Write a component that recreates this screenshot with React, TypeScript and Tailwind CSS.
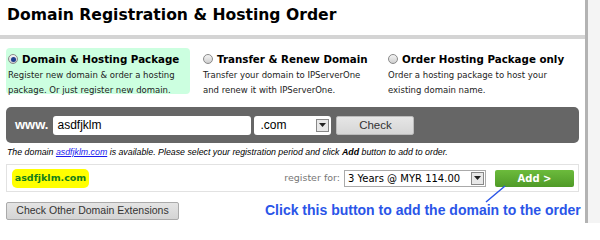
import React from 'react';

const verdana = { fontFamily: '"DejaVu Sans", Verdana, sans-serif' };
const arial = { fontFamily: '"Liberation Sans", Arial, sans-serif' };

function Radio({ checked }: { checked?: boolean }) {
  return (
    <span className="inline-flex h-[10px] w-[10px] shrink-0 items-center justify-center rounded-full border border-[#8a8a8a] bg-gradient-to-b from-[#f4f4f4] to-[#cfcfcf]">
      {checked && <span className="h-[5px] w-[5px] rounded-full bg-[#1f3f8f]" />}
    </span>
  );
}

function Package({ title, lines, active }: { title: string; lines: string[]; active?: boolean }) {
  return (
    <div className={`flex flex-col px-[2px] pt-[4px] rounded-[4px] h-[46px] ${active ? 'bg-[#ccffe0]' : ''}`}>
      <div className="flex items-center gap-[4px] whitespace-nowrap text-[10.3px] font-bold text-black leading-[14px]" style={verdana}>
        <Radio checked={active} />
        <span>{title}</span>
      </div>
      <div className="mt-[2px] whitespace-nowrap text-[8.5px] leading-[14.5px] text-[#222]" style={verdana}>
        {lines.map((l) => (
          <div key={l}>{l}</div>
        ))}
      </div>
    </div>
  );
}

function SelectArrow() {
  return (
    <span className="flex h-[13px] w-[13px] items-center justify-center border border-[#888] bg-[#e8e8e8]">
      <svg width="7" height="4" viewBox="0 0 7 4">
        <path d="M0 0h7L3.5 4z" fill="#222" />
      </svg>
    </span>
  );
}

export default function App() {
  return (
    <div className="relative flex h-[223px] w-[600px] overflow-hidden bg-white">
      <div className="flex w-[585px] flex-col">
        <h1 className="flex h-[35px] items-center whitespace-nowrap pb-[4px] pl-[7px] text-[15.6px] font-bold text-black" style={verdana}>
          Domain Registration &amp; Hosting Order
        </h1>
        <div className="h-[4px] bg-[#d4d4d4]" />

        <div className="mx-[6px] mt-[9px] grid grid-cols-[184px_174px_1fr] gap-[11px]">
          <Package
            active
            title="Domain & Hosting Package"
            lines={['Register new domain & order a hosting', 'package. Or just register new domain.']}
          />
          <Package
            title="Transfer & Renew Domain"
            lines={['Transfer your domain to IPServerOne', 'and renew it with IPServerOne.']}
          />
          <Package
            title="Order Hosting Package only"
            lines={['Order a hosting package to host your', 'existing domain name.']}
          />
        </div>

        <div className="mx-[6px] mt-[13px] flex h-[36px] shrink-0 items-center rounded-[5px] bg-[#666666] pl-[9px]">
          <span className="mr-[5px] text-[13px] font-bold text-white" style={arial}>www.</span>
          <div className="flex h-[19px] w-[198px] items-center rounded-[3px] bg-white pl-[4px] text-[12px] text-black" style={arial}>
            asdfjklm
          </div>
          <div className="ml-[3px] flex h-[19px] w-[77px] items-center justify-between rounded-[3px] bg-white pl-[6px] pr-[2px] text-[12px] text-black" style={arial}>
            .com
            <SelectArrow />
          </div>
          <button className="ml-[5px] h-[19px] w-[78px] rounded-[2px] border border-[#bbb] bg-gradient-to-b from-[#e6e6e6] to-[#d6d6d6] text-[11.5px] text-[#333]" style={arial}>
            Check
          </button>
        </div>

        <p className="mx-[7px] mt-[2px] whitespace-nowrap text-[8.8px] italic leading-[14px] text-black" style={arial}>
          The domain <span className="text-[#1a1aee] underline">asdfjklm.com</span> is available. Please select your registration period and click <b>Add</b> button to add to order.
        </p>

        <div className="mx-[6px] mt-[5px] flex h-[28px] shrink-0 items-center border border-[#e2e2e2] pl-[5px] pr-[4px]">
          <span className="flex h-[19px] w-[77px] items-center justify-center rounded-[5px] bg-[#ffff00] text-[9.5px] font-bold text-[#14801a]" style={verdana}>
            asdfjklm.com
          </span>
          <span className="ml-auto mr-[4px] whitespace-nowrap text-[9.5px] text-[#777]" style={verdana}>register for:</span>
          <div className="flex h-[17px] w-[142px] items-center justify-between whitespace-nowrap border border-[#aaa] bg-white pl-[3px] pr-[1px] text-[10px] text-black" style={verdana}>
            3 Years @ MYR 114.00
            <SelectArrow />
          </div>
          <button className="ml-[9px] h-[17px] w-[79px] rounded-[2px] bg-gradient-to-b from-[#6cbb3c] to-[#4f9a27] text-[10px] font-bold text-white" style={verdana}>
            Add &gt;
          </button>
        </div>

        <div className="mx-[6px] mt-[8px] flex items-center">
          <button className="h-[18px] w-[173px] shrink-0 whitespace-nowrap rounded-[2px] border border-[#aaa] bg-gradient-to-b from-[#e4e4e4] to-[#d4d4d4] text-[10.5px] text-[#333]" style={arial}>
            Check Other Domain Extensions
          </button>
          <span className="ml-[86px] whitespace-nowrap text-[14px] font-bold text-[#2a55e8]" style={arial}>
            Click this button to add the domain to the order
          </span>
        </div>
      </div>
      <div className="w-[3px] bg-[#b3b3b3]" />
      <div className="flex-1 bg-[#f4f4f4]" />

      <svg className="absolute left-0 top-0" width="600" height="223">
        <line x1="505" y1="186" x2="486" y2="202" stroke="#2a55e8" strokeWidth="1.5" />
      </svg>
    </div>
  );
}
